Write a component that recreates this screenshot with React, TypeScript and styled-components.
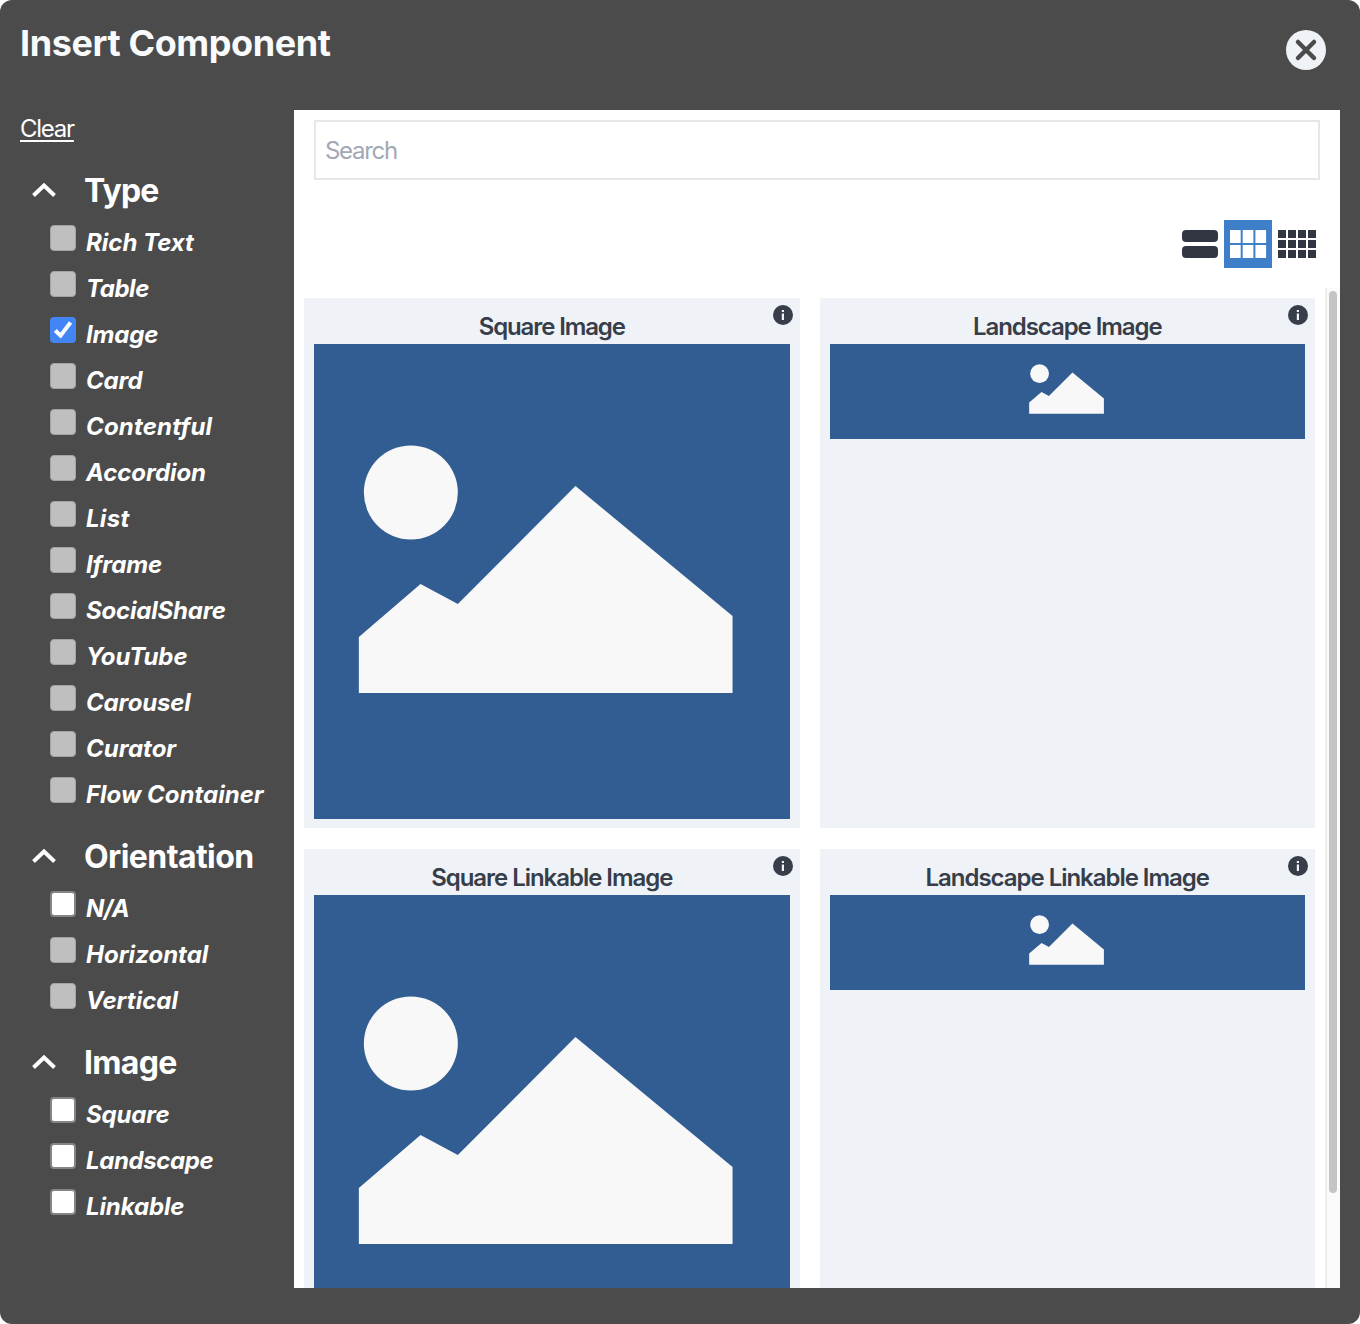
import React from "react";
import styled, { createGlobalStyle } from "styled-components";

const GlobalStyle = createGlobalStyle`
  *, *::before, *::after { box-sizing: border-box; }
  body {
    margin: 0;
    background: #fff;
    font-family: Inter, "Liberation Sans", sans-serif;
  }
  h1, h2, h3 { margin: 0; }
`;

const Dialog = styled.div`
  display: flex;
  flex-direction: column;
  width: 1360px;
  height: 1324px;
  background: #4b4b4b;
  border-radius: 12px;
  overflow: hidden;
`;

const Header = styled.header`
  display: flex;
  justify-content: space-between;
  align-items: flex-start;
  height: 110px;
  padding: 19px 34px 0 20px;
`;

const Title = styled.h1`
  color: #f9fafb;
  font-size: 36px;
  line-height: 48px;
  font-weight: 700;
  letter-spacing: -0.4px;
`;

const CloseButton = styled.button`
  display: flex;
  margin: 11px 0 0;
  padding: 0;
  border: 0;
  background: none;
`;

const Body = styled.div`
  display: flex;
  height: 1178px;
  padding-right: 20px;
`;

const Sidebar = styled.aside`
  display: flex;
  flex-direction: column;
  align-items: flex-start;
  width: 294px;
  padding: 0 0 0 20px;
  color: #fff;
`;

const ClearLink = styled.a`
  margin: 2px 0 21px;
  font-size: 24px;
  line-height: 34px;
  letter-spacing: -1.25px;
  text-decoration: underline;
  text-decoration-thickness: 2px;
  text-underline-offset: 3px;
`;

const Section = styled.section`
  margin-bottom: 20px;
`;

const SectionHeader = styled.div`
  display: flex;
  align-items: center;
  gap: 28px;
  height: 48px;
  padding-left: 12px;
  svg { margin-bottom: 2px; }
`;

const SectionTitle = styled.h2<{ $spacing: number }>`
  font-size: 32px;
  line-height: 48px;
  font-weight: 650;
  letter-spacing: ${(p) => p.$spacing}px;
`;

const Option = styled.label`
  display: flex;
  gap: 10px;
  height: 46px;
  padding: 10px 0 0 30px;
`;

const OptionText = styled.span<{ $spacing: number }>`
  font-size: 24px;
  line-height: 36px;
  font-style: italic;
  font-weight: 650;
  white-space: nowrap;
  letter-spacing: ${(p) => p.$spacing}px;
`;

type BoxState = "disabled" | "checked" | "empty";

const boxColors: Record<BoxState, [string, string]> = {
  disabled: ["#bfbfbf", "#a3a3a3"],
  checked: ["#4285f4", "#4285f4"],
  empty: ["#ffffff", "#858585"],
};

const Box = styled.span<{ $state: BoxState }>`
  display: flex;
  align-items: center;
  justify-content: center;
  flex: none;
  width: 26px;
  height: 26px;
  border: ${(p) => (p.$state === "disabled" ? 1 : 2)}px solid ${(p) => boxColors[p.$state][1]};
  border-radius: 4px;
  background: ${(p) => boxColors[p.$state][0]};
`;

const Main = styled.main`
  display: flex;
  flex-direction: column;
  flex: 1;
  background: #fff;
`;

const SearchInput = styled.input`
  height: 60px;
  margin: 10px 20px 40px;
  padding: 0 9px;
  border: 2px solid #e5e7eb;
  background: #fff;
  font-family: inherit;
  font-size: 24px;
  letter-spacing: -1.3px;
  outline: none;
  &::placeholder { color: #a2a8b4; opacity: 1; }
`;

const ViewToolbar = styled.div`
  display: flex;
  justify-content: flex-end;
  height: 48px;
  margin-bottom: 20px;
  padding-right: 20px;
`;

const ViewButton = styled.button<{ $active?: boolean }>`
  display: flex;
  width: 48px;
  height: 48px;
  padding: 0;
  border: 0;
  color: ${(p) => (p.$active ? "#fff" : "#313642")};
  background: ${(p) => (p.$active ? "#3f7fca" : "transparent")};
`;

const ScrollArea = styled.div`
  display: flex;
  height: 1000px;
  overflow: hidden;
`;

const Grid = styled.div`
  display: grid;
  grid-template-columns: repeat(2, 495.5px);
  grid-auto-rows: 530px;
  gap: 21px 20px;
  flex: 1;
  padding: 10px 0 0 10px;
`;

const Card = styled.article`
  position: relative;
  padding: 10px 10px 0;
  background: #eff3f8;
`;

const CardTitle = styled.h3<{ $spacing: number }>`
  height: 36px;
  color: #373d49;
  font-size: 24px;
  line-height: 37px;
  font-weight: 600;
  text-align: center;
  letter-spacing: ${(p) => p.$spacing}px;
`;

const InfoBadge = styled.span`
  position: absolute;
  top: 7px;
  right: 7px;
  display: flex;
`;

const Thumb = styled.div<{ $wide?: boolean }>`
  height: ${(p) => (p.$wide ? 95 : 475)}px;
  background: #315d92;
  svg { display: block; width: 100%; height: 100%; }
`;

const ScrollTrack = styled.div`
  width: 15px;
  padding: 3px 0 0 2px;
  border-left: 2px solid #ededed;
  background: #fafafa;
`;

const ScrollThumb = styled.div`
  width: 8px;
  height: 902px;
  border-radius: 4px;
  background: #c4c4c4;
`;

function Picture() {
  return (
    <svg viewBox="0 0 475 475" fill="#f8f8f8">
      <circle cx="96.600" cy="148.500" r="47" />
      <path d="M44.600 293L106.300 240L143.600 260L261.200 142L418.300 272V349H44.600Z" />
    </svg>
  );
}

function InfoIcon() {
  return (
    <svg width="20" height="20" viewBox="0 0 20 20">
      <circle cx="10" cy="10" r="10" fill="#373d49" />
      <path d="M8.800 5h2.200v2H8.800zM8.800 8.500h2.200v6.500H8.800z" fill="#eff3f8" />
    </svg>
  );
}

function Chevron() {
  return (
    <svg width="24" height="16" viewBox="0 0 24 16" fill="none" stroke="#fff" strokeWidth="4">
      <path d="M1.500 13.500L12 3.500L22.500 13.500" />
    </svg>
  );
}

function CheckMark() {
  return (
    <svg width="22" height="22" viewBox="0 0 22 22" fill="none" stroke="#fff" strokeWidth="4">
      <path d="M3.300 11.500L8.600 16.600L18.500 3.500" />
    </svg>
  );
}

function ListIcon() {
  return (
    <svg width="48" height="48" fill="currentColor">
      <rect x="6" y="10" width="36" height="12" rx="4" />
      <rect x="6" y="26" width="36" height="12" rx="4" />
    </svg>
  );
}

function TilesIcon() {
  return (
    <svg width="48" height="48" fill="currentColor">
      {[10, 25].map((y) =>
        [6, 18.7, 31.4].map((x) => (
          <rect key={`${x}-${y}`} x={x} y={y} width="10.700" height="13" />
        )),
      )}
    </svg>
  );
}

function DenseIcon() {
  return (
    <svg width="48" height="48" fill="currentColor">
      {[10, 20, 30].map((y) =>
        [6, 16, 26, 36].map((x) => <rect key={`${x}-${y}`} x={x} y={y} width="8" height="8" />),
      )}
    </svg>
  );
}

type OptionData = [string, BoxState, number];

const sections: { title: string; spacing: number; options: OptionData[] }[] = [
  {
    title: "Type",
    spacing: -0.85,
    options: [
      ["Rich Text", "disabled", 0],
      ["Table", "disabled", -0.45],
      ["Image", "checked", -0.15],
      ["Card", "disabled", -0.2],
      ["Contentful", "disabled", 0.18],
      ["Accordion", "disabled", -0.1],
      ["List", "disabled", 0.3],
      ["Iframe", "disabled", -0.15],
      ["SocialShare", "disabled", -0.2],
      ["YouTube", "disabled", -0.05],
      ["Carousel", "disabled", -0.15],
      ["Curator", "disabled", 0],
      ["Flow Container", "disabled", 0],
    ],
  },
  {
    title: "Orientation",
    spacing: -0.58,
    options: [
      ["N/A", "empty", -0.6],
      ["Horizontal", "disabled", 0],
      ["Vertical", "disabled", 0],
    ],
  },
  {
    title: "Image",
    spacing: -0.7,
    options: [
      ["Square", "empty", -0.15],
      ["Landscape", "empty", -0.38],
      ["Linkable", "empty", -0.12],
    ],
  },
];

const cards = [
  { title: "Square Image", wide: false, spacing: -1.12 },
  { title: "Landscape Image", wide: true, spacing: -1.07 },
  { title: "Square Linkable Image", wide: false, spacing: -1.04 },
  { title: "Landscape Linkable Image", wide: true, spacing: -1.03 },
];

export default function App() {
  return (
    <>
      <GlobalStyle />
      <Dialog>
        <Header>
          <Title>Insert Component</Title>
          <CloseButton aria-label="Close">
            <svg width="40" height="40" viewBox="0 0 40 40">
              <circle cx="20" cy="20" r="20" fill="#eff3f8" />
              <path d="M12 12L28 28M28 12L12 28" stroke="#4b4b4b" strokeWidth="4.500" strokeLinecap="round" />
            </svg>
          </CloseButton>
        </Header>
        <Body>
          <Sidebar>
            <ClearLink>Clear</ClearLink>
            {sections.map((section) => (
              <Section key={section.title}>
                <SectionHeader>
                  <Chevron />
                  <SectionTitle $spacing={section.spacing}>{section.title}</SectionTitle>
                </SectionHeader>
                {section.options.map(([name, state, spacing]) => (
                  <Option key={name}>
                    <Box $state={state}>{state === "checked" && <CheckMark />}</Box>
                    <OptionText $spacing={spacing}>{name}</OptionText>
                  </Option>
                ))}
              </Section>
            ))}
          </Sidebar>
          <Main>
            <SearchInput placeholder="Search" />
            <ViewToolbar>
              <ViewButton aria-label="List"><ListIcon /></ViewButton>
              <ViewButton aria-label="Tiles" $active><TilesIcon /></ViewButton>
              <ViewButton aria-label="Dense grid"><DenseIcon /></ViewButton>
            </ViewToolbar>
            <ScrollArea>
              <Grid>
                {cards.map((card) => (
                  <Card key={card.title}>
                    <CardTitle $spacing={card.spacing}>{card.title}</CardTitle>
                    <Thumb $wide={card.wide}><Picture /></Thumb>
                    <InfoBadge><InfoIcon /></InfoBadge>
                  </Card>
                ))}
              </Grid>
              <ScrollTrack><ScrollThumb /></ScrollTrack>
            </ScrollArea>
          </Main>
        </Body>
      </Dialog>
    </>
  );
}
